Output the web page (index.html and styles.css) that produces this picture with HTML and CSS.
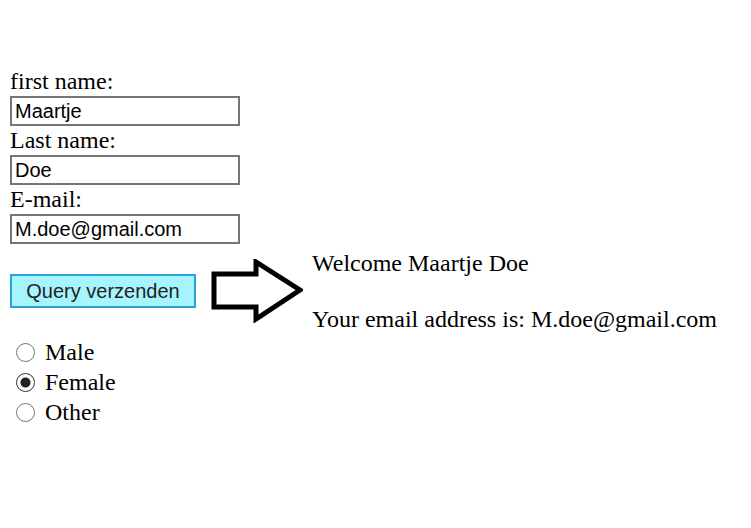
FILE: index.html
```html
<!DOCTYPE html>
<html>
<head>
<meta charset="utf-8">
<link rel="stylesheet" href="styles.css">
</head>
<body>
<form class="form">
  <div class="label">first name:</div>
  <input class="field" type="text" value="Maartje">
  <div class="label">Last name:</div>
  <input class="field" type="text" value="Doe">
  <div class="label">E-mail:</div>
  <input class="field" type="text" value="M.doe@gmail.com">
  <div class="row">
    <button class="submit" type="button">Query verzenden</button>
    <svg class="arrow" width="92" height="64" viewBox="0 0 92 64">
      <polygon points="3,15 45,15 45,3 89,31 45,60 45,48 3,48" fill="#fff" stroke="#000" stroke-width="5" stroke-linejoin="miter"/>
    </svg>
    <div class="result">
      <div class="line">Welcome Maartje Doe</div>
      <div class="line"></div>
      <div class="line">Your email address is: M.doe@gmail.com</div>
    </div>
  </div>
  <div class="radios">
    <label class="opt"><input class="radio" type="radio" name="g"><span>Male</span></label>
    <label class="opt"><input class="radio" type="radio" name="g" checked><span>Female</span></label>
    <label class="opt"><input class="radio" type="radio" name="g"><span>Other</span></label>
  </div>
</form>
</body>
</html>
```
FILE: styles.css
```css
html, body {
  margin: 0;
  padding: 0;
  background: #fff;
}
body {
  font-family: "Liberation Serif", "Times New Roman", serif;
  font-size: 24px;
  color: #000;
}
.form {
  display: flex;
  flex-direction: column;
  align-items: flex-start;
  padding: 67px 0 0 10px;
}
.label {
  line-height: 29px;
  height: 29px;
}
.field {
  box-sizing: border-box;
  width: 230px;
  height: 30px;
  margin: 0;
  padding: 0 3px;
  border: 2px solid #767676;
  border-radius: 0;
  font-family: "Liberation Sans", Arial, sans-serif;
  font-size: 20px;
  color: #000;
  background: #fff;
  outline: none;
}
.row {
  display: flex;
  align-items: center;
  margin-top: 5px;
}
.submit {
  box-sizing: border-box;
  width: 186px;
  height: 34px;
  margin: 0;
  padding: 0;
  border: 2px solid #2a9fdc;
  border-radius: 0;
  background: #a6f4fe;
  color: #222;
  font-family: "Liberation Sans", Arial, sans-serif;
  font-size: 20px;
}
.arrow {
  display: block;
  margin-left: 15px;
}
.result {
  margin-left: 9px;
}
.line {
  height: 28px;
  line-height: 28px;
  white-space: nowrap;
}
.radios {
  display: flex;
  flex-direction: column;
  margin-top: 4px;
}
.opt {
  display: flex;
  align-items: center;
  height: 30px;
  line-height: 30px;
}
.radio {
  appearance: none;
  -webkit-appearance: none;
  box-sizing: border-box;
  width: 19px;
  height: 19px;
  margin: 0 10px 0 6px;
  border: 1.5px solid #767676;
  border-radius: 50%;
  background: #fff;
}
.radio:checked {
  border-color: #333;
  background: radial-gradient(circle, #222 0, #222 4.5px, #fff 5.5px);
}
```
